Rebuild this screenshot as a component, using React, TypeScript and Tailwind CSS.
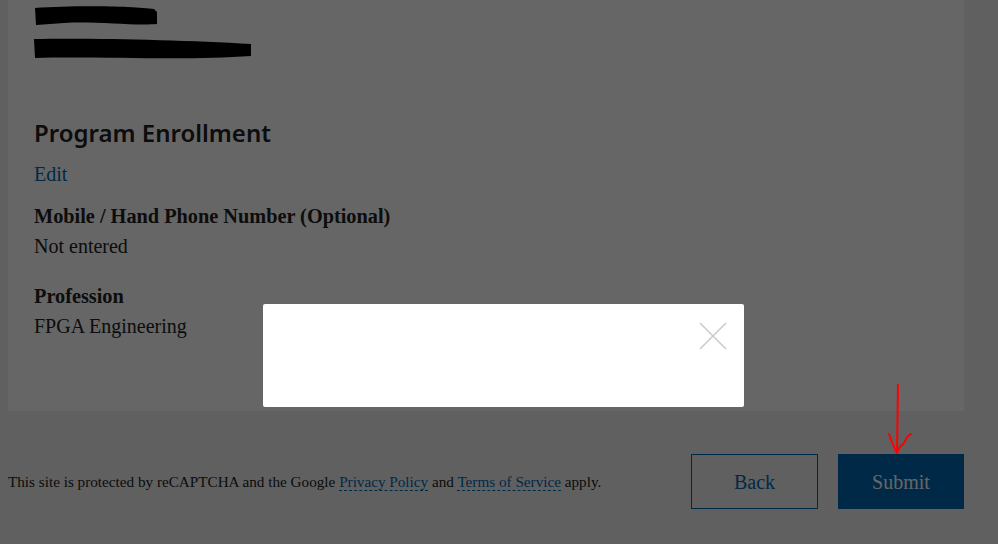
import React from 'react'

const serif = { fontFamily: '"Liberation Serif", "Times New Roman", serif' }
const sans = { fontFamily: '"Noto Sans", "Open Sans", sans-serif' }

const Field: React.FC<{ label: string; value: string; className?: string }> = ({ label, value, className }) => {
  return (
    <div className={className}>
      <div className="text-[20.3px] leading-[24px] font-bold text-[#222]">{label}</div>
      <div className="mt-[6px] text-[20px] leading-[24px] text-[#222]">{value}</div>
    </div>
  )
}

const Redacted = () => (
  <svg width="240" height="64" viewBox="0 0 240 64" className="block">
    <path d="M1 8 C40 5 100 6 120 9 L123 12 L123 24 C100 26 60 21 30 23 L2 25 Z" fill="#000" />
    <path d="M0 39 C60 38 150 40 217 44 L217 56 C150 61 60 56 1 58 Z" fill="#000" />
  </svg>
)

const App: React.FC = () => {
  return (
    <div className="relative w-full h-[544px] overflow-hidden bg-[#f0f0f0]" style={serif}>
      <div className="ml-2 w-[956px] h-[411px] bg-white pl-[26px]">
        <Redacted />
        <h2 className="mt-[54px] text-[24px] leading-[30px] font-semibold text-[#222]" style={sans}>
          Program Enrollment
        </h2>
        <a className="block mt-[14px] text-[20px] leading-[24px] text-[#0068b5]">Edit</a>
        <Field className="mt-[18px]" label="Mobile / Hand Phone Number (Optional)" value="Not entered" />
        <Field className="mt-[26px]" label="Profession" value="FPGA Engineering" />
      </div>

      <div className="mt-[43px] flex items-center justify-between pl-2 pr-[34px]">
        <p className="text-[15.2px] leading-[20px] text-[#222]">
          This site is protected by reCAPTCHA and the Google{' '}
          <a className="text-[#0068b5] border-b border-dashed border-[#0068b5]">Privacy Policy</a> and{' '}
          <a className="text-[#0068b5] border-b border-dashed border-[#0068b5]">Terms of Service</a> apply.
        </p>
        <div className="flex gap-[20px]">
          <button className="w-[127px] h-[55px] border border-[#0068b5] text-[20px] text-[#0068b5] bg-transparent">
            Back
          </button>
          <button className="w-[126px] h-[55px] bg-[#0068b5] text-[20px] text-white">
            Submit
          </button>
        </div>
      </div>

      <div className="absolute inset-0 bg-black/60">
        <div className="absolute left-[263px] top-[304px] w-[481px] h-[103px] bg-white rounded-[2px]">
          <svg width="28" height="28" viewBox="0 0 28 28" className="absolute left-[436px] top-[18px]">
            <path d="M1 1 L27 27 M27 1 L1 27" stroke="#cccccc" strokeWidth="1.6" fill="none" />
          </svg>
        </div>
      </div>

      <svg width="40" height="80" viewBox="0 0 40 80" className="absolute left-[880px] top-[380px]">
        <path
          d="M18 5 L17 73 M9 54 C11 60 13 66 17 73 C19 68 20 66 22 65 C24 64 25 62 26 59 C27 57 29 55 31 54"
          stroke="#ff0000"
          strokeWidth="2"
          fill="none"
          strokeLinecap="round"
          strokeLinejoin="round"
        />
      </svg>
    </div>
  )
}

export default App
